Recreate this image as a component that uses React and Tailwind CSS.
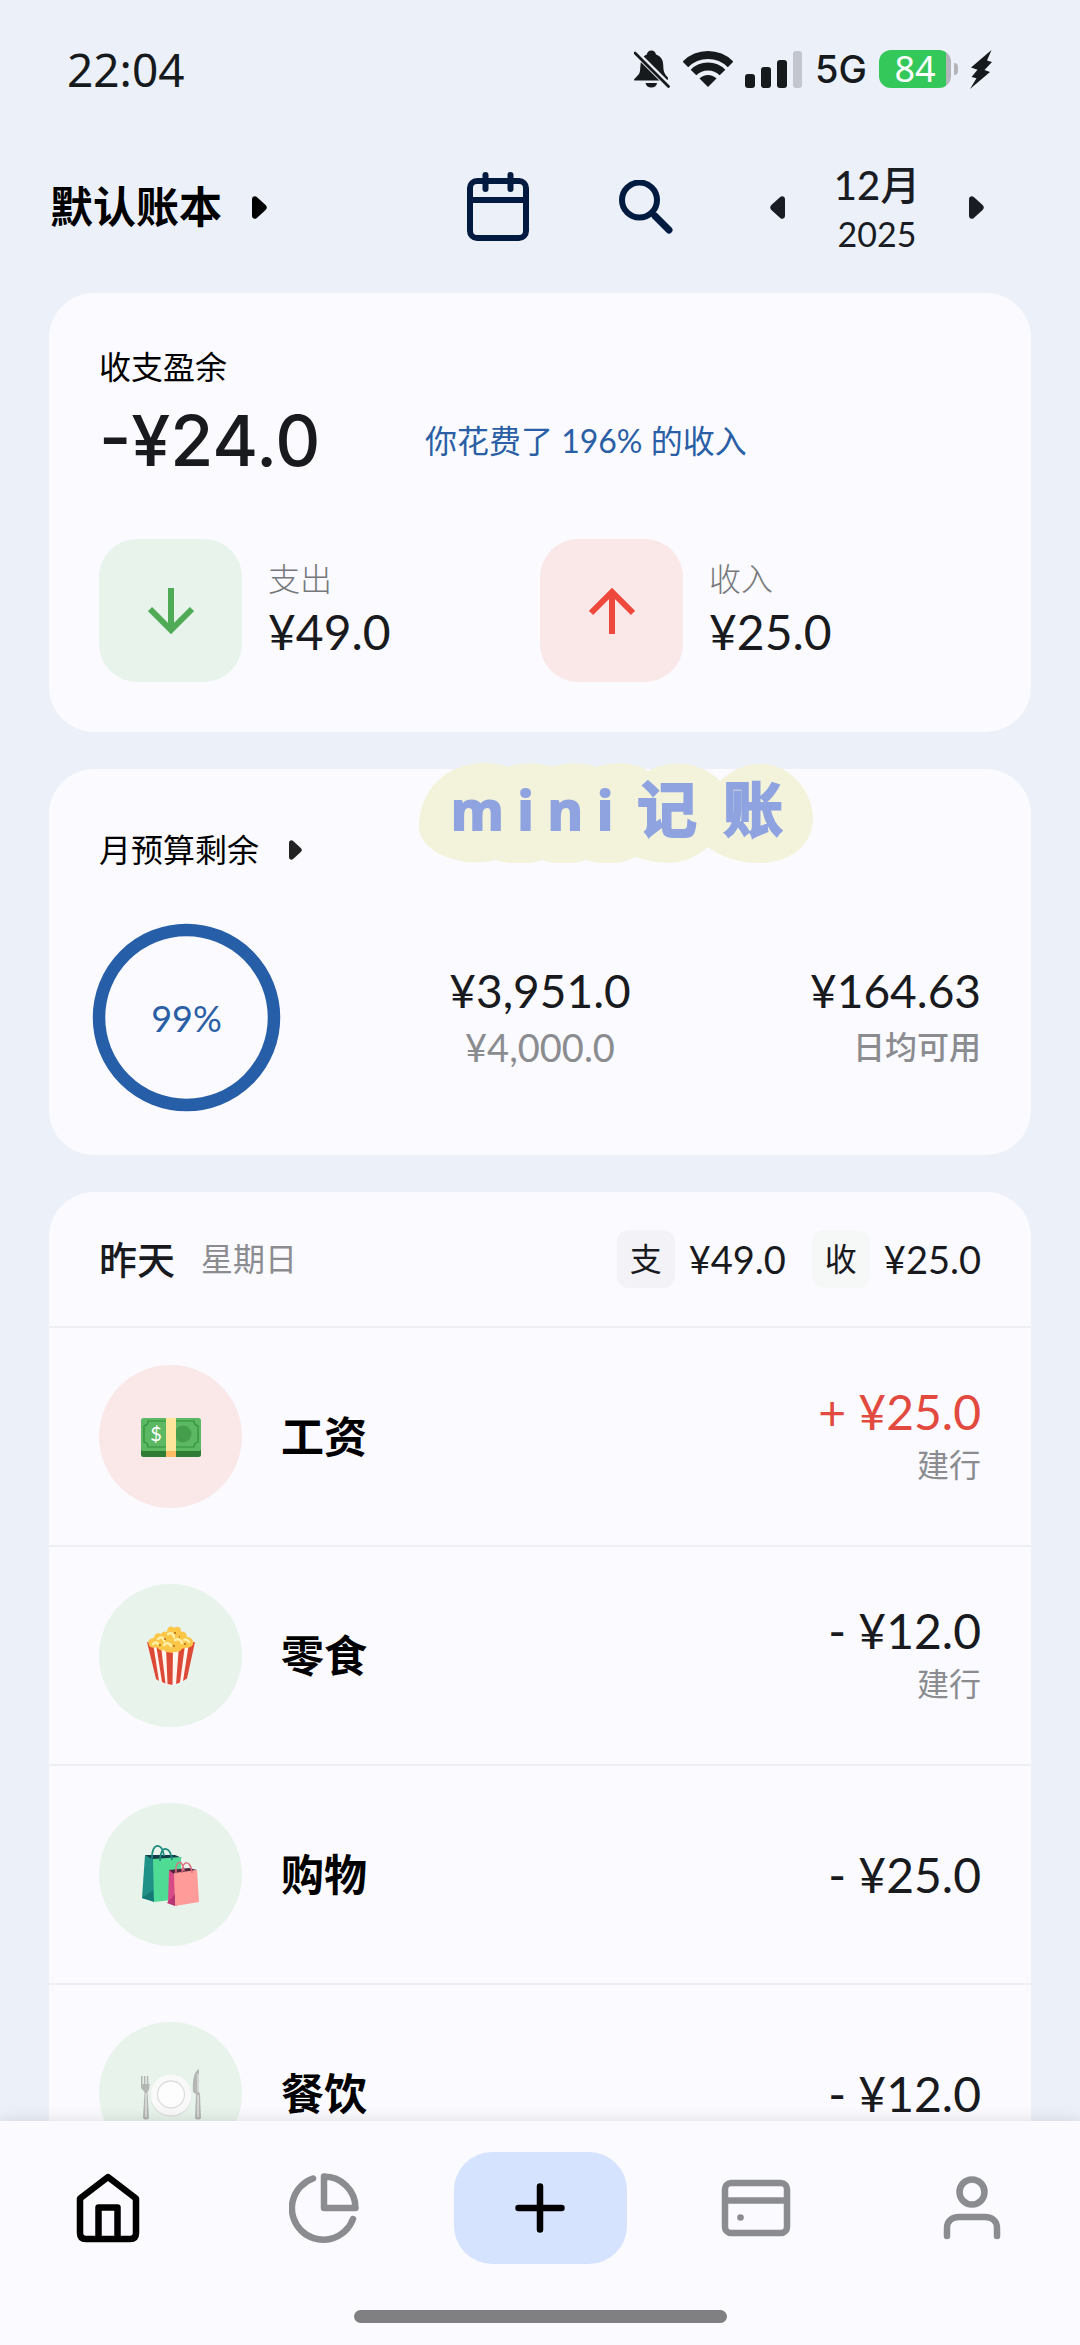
import React from 'react';

const TriangleIcon = ({ className }) => (
    <svg viewBox="0 0 15 23" className={className} fill="currentColor" aria-hidden="true">
        <path d="M0 3.2C0 .6 2.8-.7 4.8 1.1l8.8 8c1.6 1.4 1.6 3.4 0 4.8l-8.8 8C2.800 23.700 0 22.400 0 19.800Z" />
    </svg>
);

const BellOffIcon = () => (
    <svg viewBox="0 0 36 38" className="w-[36px] h-[38px]" aria-hidden="true">
        <path
            d="M0 29.500 5 24c1.500-2.500 1-6 1.700-10.500C7.500 8.500 9.600 6 12.800 4.600 13.400 1.800 15 .6 17.400.6s4 1.200 4.600 4c4.500 1.500 7 5.200 7.200 10 .2 6 .6 9 4.300 12.400.9.9 1 3.600-1.500 3.600H2C.6 30.600-.5 30.300 0 29.500Z"
            fill="#161a1c"
        />
        <path d="M11.500 33h11.600c-.6 3-2.800 4.600-5.800 4.600s-5.200-1.600-5.800-4.600Z" fill="#161a1c" />
        <path d="M0 1 36 37" stroke="#ecf0f9" strokeWidth="6" />
        <path d="M1 3 34.500 36.500" stroke="#161a1c" strokeWidth="2.800" strokeLinecap="round" />
    </svg>
);

const WifiIcon = () => (
    <svg viewBox="0 0 50 36" className="w-[50px] h-[36px]" fill="none" stroke="#161a1c" strokeWidth="8" aria-hidden="true">
        <path d="M2.400 13.400a32 32 0 0 1 45.200 0" />
        <path d="M10.500 21.500a20.500 20.500 0 0 1 29 0" />
        <path d="m25 36-8.500-8.500a12 12 0 0 1 17 0Z" fill="#161a1c" stroke="none" />
    </svg>
);

const SignalIcon = () => (
    <svg viewBox="0 0 58 37" className="w-[58px] h-[37px]" fill="#161a1c" aria-hidden="true">
        <rect x="0" y="23" width="10" height="14" rx="3" />
        <rect x="16" y="16" width="10" height="21" rx="3" />
        <rect x="32" y="9" width="10" height="28" rx="3" />
        <rect x="48" y="0" width="9" height="37" rx="3" fill="#c3c6cf" />
    </svg>
);

const BoltIcon = () => (
    <svg viewBox="0 0 23 39" className="w-[23px] h-[39px]" fill="#161a1c" aria-hidden="true">
        <path d="M21.500 0 1 17.500l6.500 2.200L1.500 27l5 1.300L0 39l20-17-5.500-2L22 12l-5-1.500Z" />
    </svg>
);

const CalendarIcon = () => (
    <svg viewBox="0 0 64 70" className="w-[64px] h-[70px]" fill="none" stroke="#001b3f" strokeWidth="6" strokeLinecap="round" aria-hidden="true">
        <rect x="4" y="9" width="56" height="57" rx="7" />
        <path d="M4 28h56M19.500 3v14M44.500 3v14" />
    </svg>
);

const SearchIcon = () => (
    <svg viewBox="0 0 54 54" className="w-[54px] h-[54px]" fill="none" stroke="#001b3f" aria-hidden="true">
        <circle cx="20.500" cy="20" r="17.500" strokeWidth="6" />
        <path d="m36 36 14 14" strokeWidth="7" strokeLinecap="round" />
    </svg>
);

const DownArrow = () => (
    <svg viewBox="0 0 46 46" className="w-[46px] h-[46px]" fill="none" stroke="#4fab55" strokeWidth="6" aria-hidden="true">
        <path d="M23 0v42M2 21l21 21 21-21" />
    </svg>
);

const UpArrow = () => (
    <svg viewBox="0 0 46 46" className="w-[46px] h-[46px]" fill="none" stroke="#ee473c" strokeWidth="6" aria-hidden="true">
        <path d="M23 46V4M2 25 23 4l21 21" />
    </svg>
);

const CashIcon = () => (
    <svg viewBox="0 0 60 40" className="w-[60px] h-[40px]" aria-hidden="true">
        <rect y="4" width="60" height="36" rx="2.500" fill="#2f7d34" />
        <rect y="1" width="60" height="33" rx="2.500" fill="#5cb863" />
        <path d="M7 4h46c0 3 1.500 4.500 4 5v16c-2.500.5-4 2-4 5H7c0-3-1.500-4.500-4-5V9c2.500-.5 4-2 4-5Z" fill="none" stroke="#2f8f3a" strokeWidth="1.200" />
        <circle cx="42" cy="17" r="8.500" fill="#449e4b" />
        <path d="M25 1h10v33H25Z" fill="#fde59b" />
        <path d="M25 34h10v6H25Z" fill="#fdbb63" />
        <text x="15" y="24" textAnchor="middle" fill="#fff" fontSize="20" fontFamily="Lato, sans-serif">$</text>
    </svg>
);

const PopcornIcon = () => (
    <svg viewBox="0 0 50 60" className="w-[50px] h-[60px]" aria-hidden="true">
        <path d="M1 16 10 53c8 4 10 6 15 6s8-2 15-6l9-37-24 8Z" fill="#fff5ef" />
        <path d="M1 16 10 53l3 2L7 17ZM10 18l6 38 3.500 1.500L15 20ZM20 21l1.500 37 5 1L27 21ZM33 20l-3 38 4-1.500L39 19ZM43 17l-6 38 4-2.500L49 16Z" fill="#dc4a37" />
        <path d="M3 19c-2-4 1-7 5-7 0-4 4-6 7-4 2-3 4-3 6-2 0-5 4-7 7-4 4-3 8 0 7 4 4-1 6 2 6 5 5 0 8 5 5 9-4 3-9 1-11 4-3 3-7 1-9 3-3-1-6 0-8-3-4 1-6-1-7-3-3 1-7 1-8-2Z" fill="#fcc648" />
        <path d="M12 13c3-3 6-1 6 2M22 8c3-2 6 0 6 3M29 14c3-2 6 0 7 3M18 19c2-3 6-2 7 1M7 18c2-2 4-2 5 0M38 14c2-1 4 0 5 2" fill="none" stroke="#fff0a8" strokeWidth="2.500" strokeLinecap="round" />
        <path d="M19 12v2M29 6v2M27 20h2M38 18h2M13 19h2M33 11h1" stroke="#a9681c" strokeWidth="1.500" />
    </svg>
);

const BagsIcon = () => (
    <svg viewBox="0 0 58 62" className="w-[58px] h-[62px]" aria-hidden="true">
        <path d="M3 11 0 54l12 3 4-42Z" fill="#1f9187" />
        <path d="M3 11h30l7 3-25 4Z" fill="#123c48" />
        <path d="m11 15 28-2v42l-27 3Z" fill="#4fdb94" />
        <path d="m11 46-11 8 12 4Z" fill="#157a76" />
        <path d="M10 15c-1-17 11-17 12-3M18 17c0-17 11-15 12-1" fill="none" stroke="#1d8a7c" strokeWidth="1.800" />
        <path d="M27 26 26 59l9 3 2-34Z" fill="#d84a87" />
        <path d="m27 26 20-2 8 2-22 5Z" fill="#50263c" />
        <path d="m32 29 23-3 2 32-24 4Z" fill="#ff9b98" />
        <path d="m33 50-8 9 8 3Z" fill="#b73673" />
        <path d="M34 30c-1-15 7-15 8-3M40 29c0-14 9-13 10 0" fill="none" stroke="#dc6f83" strokeWidth="1.500" />
    </svg>
);

const PlateIcon = () => (
    <svg viewBox="0 0 60 52" className="w-[60px] h-[52px]" aria-hidden="true">
        <circle cx="30" cy="28" r="20.500" fill="#d5d8d6" />
        <circle cx="30" cy="27" r="20.500" fill="#f9f9f9" />
        <circle cx="30" cy="26.500" r="13.500" fill="#fdfdfd" stroke="#dcdedd" strokeWidth="1.300" />
        <path d="M0 8h1.500v8h1.400V8h1.500v8h1.400V8h1.500v8H8.700L8 21.500 6.500 24 8 50c-1 2-5 2-6 0l1.500-26L0 20Z" fill="#b4b6b4" />
        <path d="M58 1v23l1 2 1 24c-1 2-5 2-6 0l1-24-3-2c-.5-9 0-20 6-23Z" fill="#b4b6b4" />
        <path d="M5 25v24M57 6v18M57 27v22" stroke="#e8e9e8" strokeWidth="1.200" />
    </svg>
);

const HomeIcon = () => (
    <svg viewBox="0 0 64 70" className="w-[64px] h-[70px]" fill="none" stroke="#000" strokeWidth="6.500" strokeLinejoin="round" aria-hidden="true">
        <path d="M4 25.500 32 4l28 21.500V60q0 6-6 6H10q-6 0-6-6Z" />
        <path d="M22.500 66V34.500h19V66" />
    </svg>
);

const PieIcon = () => (
    <svg viewBox="0 0 70 70" className="w-[70px] h-[70px]" fill="none" stroke="#8b8c90" strokeWidth="6.500" strokeLinecap="round" strokeLinejoin="round" aria-hidden="true">
        <path d="M24 5.500A31.500 31.500 0 1 0 64 46" />
        <path d="M35 3.500A31.500 31.500 0 0 1 66.500 35H35Z" />
    </svg>
);

const PlusIcon = () => (
    <svg viewBox="0 0 50 50" className="w-[50px] h-[50px]" stroke="#000" strokeWidth="6.500" strokeLinecap="round" aria-hidden="true">
        <path d="M25 3.500v43M3.500 25h43" />
    </svg>
);

const WalletIcon = () => (
    <svg viewBox="0 0 70 58" className="w-[70px] h-[58px]" fill="none" stroke="#8b8c90" strokeWidth="6.500" aria-hidden="true">
        <rect x="4" y="4" width="62" height="50" rx="6" />
        <path d="M4 21.500h62" />
        <circle cx="19.500" cy="38.500" r="3.300" fill="#8b8c90" stroke="none" />
    </svg>
);

const UserIcon = () => (
    <svg viewBox="0 0 58 64" className="w-[58px] h-[64px]" fill="none" stroke="#8b8c90" strokeWidth="6.500" strokeLinecap="round" aria-hidden="true">
        <circle cx="29" cy="16" r="12.500" />
        <path d="M4 60v-8c0-7 5-11 12-11h26c7 0 12 4 12 11v8" />
    </svg>
);

const records = [
    { name: '工资', amount: '+ ¥25.0', account: '建行', income: true, icon: <CashIcon /> },
    { name: '零食', amount: '- ¥12.0', account: '建行', icon: <PopcornIcon /> },
    { name: '购物', amount: '- ¥25.0', icon: <BagsIcon /> },
    { name: '餐饮', amount: '- ¥12.0', icon: <PlateIcon /> },
];

const tabs = [
    { label: '首页', icon: <HomeIcon /> },
    { label: '统计', icon: <PieIcon /> },
    { label: '记一笔', icon: <PlusIcon />, primary: true },
    { label: '资产', icon: <WalletIcon /> },
    { label: '我的', icon: <UserIcon /> },
];

const StatusBar = () => (
    <div className="flex h-[138px] shrink-0 items-center justify-between pl-[67px] pr-[87px] text-[#161a1c]">
        <span className="font-['Noto_Sans'] text-[46px] leading-none">22:04</span>
        <div className="flex items-center">
            <BellOffIcon />
            <div className="ml-[13px]"><WifiIcon /></div>
            <div className="ml-[12px]"><SignalIcon /></div>
            <span className="ml-[12px] font-['Inter'] text-[38px] font-medium leading-none">5G</span>
            <div className="ml-[12px] flex h-[38px] w-[72px] items-center justify-center rounded-[12px] bg-linear-to-r from-[#34c759] from-93% to-[#b3b5ba] to-93% font-['Noto_Sans'] text-[36px] leading-none text-white">
                84
            </div>
            <div className="ml-[3px] h-[12px] w-[4px] rounded-r-full bg-[#b3b5ba]" />
            <div className="ml-[12px]"><BoltIcon /></div>
        </div>
    </div>
);

const Header = () => (
    <header className="mb-[17px] flex h-[138px] shrink-0 items-center pl-[50px] pr-[96px]">
        <button type="button" className="flex items-center gap-[30px] text-[43px] font-bold leading-[56px] text-black">
            默认账本
            <TriangleIcon className="h-[23px] w-[15px]" />
        </button>
        <button type="button" aria-label="日历" className="ml-auto"><CalendarIcon /></button>
        <button type="button" aria-label="搜索" className="ml-[89px]"><SearchIcon /></button>
        <button type="button" aria-label="上个月" className="ml-[97px] text-[#191c22]">
            <TriangleIcon className="h-[23px] w-[15px] rotate-180" />
        </button>
        <div className="flex w-[184px] flex-col items-center text-[#191c22]">
            <span className="text-[40px] font-medium leading-[54px]">12月</span>
            <span className="text-[34px] leading-[44px]">2025</span>
        </div>
        <button type="button" aria-label="下个月" className="text-[#191c22]">
            <TriangleIcon className="h-[23px] w-[15px]" />
        </button>
    </header>
);

const FlowTile = ({ label, value, icon, tileClass }) => (
    <div className="flex items-center gap-[26px]">
        <div className={`flex size-[143px] items-center justify-center rounded-[38px] ${tileClass}`}>{icon}</div>
        <div className="pb-[6px]">
            <p className="text-[32px] font-light leading-[48px] text-[#77787b]">{label}</p>
            <p className="text-[48px] leading-[58px]">{value}</p>
        </div>
    </div>
);

const BalanceCard = () => (
    <section className="rounded-[45px] bg-[#fafaff] p-[50px]">
        <h2 className="text-[32px] leading-[48px] text-black">收支盈余</h2>
        <div className="mt-[8px] flex items-center">
            <p className="min-w-[326px] font-['Inter'] text-[70px] font-medium leading-[84px]">-¥24.0</p>
            <p className="text-[32px] leading-[48px] text-[#2a5fa5]">你花费了 196% 的收入</p>
        </div>
        <div className="mt-[56px] grid grid-cols-2">
            <FlowTile label="支出" value="¥49.0" icon={<DownArrow />} tileClass="bg-[#e7f3eb]" />
            <FlowTile label="收入" value="¥25.0" icon={<UpArrow />} tileClass="bg-[#fae8e8]" />
        </div>
    </section>
);

// the sticker hangs over the top edge of the budget card
const Sticker = () => (
    <div className="absolute left-[370px] top-[-6px] h-[100px] w-[396px]">
        <svg viewBox="0 0 396 100" className="absolute inset-0 size-full" fill="#f2f3da" aria-hidden="true">
            <path d="M0 64C0 28 26 0 66 0c8 0 16 1 23 4 12-5 32-5 44 0 12-5 32-5 44 0 16-6 40-5 52 4 24-13 54-9 72 10 28-26 64-22 84 8 22 36 2 74-46 74-18 0-38-6-50-16-22 20-48 18-72 10-16 8-34 8-50 3-14 5-30 5-44 0-14 5-32 5-46 0C40 106 0 88 0 64Z" />
        </svg>
        <div className="relative flex h-full items-center justify-center gap-[24px] pb-[8px] font-['Noto_Sans','Noto_Sans_CJK_SC',sans-serif] font-bold leading-none text-[#8fa3e0] [-webkit-text-stroke:2px_#8fa3e0]">
            <div className="flex gap-[14px] text-[54px]">
                <span>m</span>
                <span>i</span>
                <span>n</span>
                <span>i</span>
            </div>
            <div className="flex gap-[26px] text-[60px]">
                <span>记</span>
                <span>账</span>
            </div>
        </div>
    </div>
);

const BudgetCard = () => (
    <section className="relative rounded-[45px] bg-[#fafaff] px-[50px] pb-[50px] pt-[57px]">
        <Sticker />
        <button type="button" className="flex items-center gap-[30px] text-[32px] leading-[48px] text-black">
            月预算剩余
            <TriangleIcon className="h-[20px] w-[13px] text-[#222]" />
        </button>
        <div className="mt-[56px] grid grid-cols-3 items-center">
            <div className="relative flex size-[175px] items-center justify-center">
                <svg viewBox="0 0 175 175" className="absolute inset-0 size-full overflow-visible" fill="none" aria-hidden="true">
                    <circle cx="87.500" cy="87.500" r="87.500" stroke="#265ea8" strokeWidth="12.500" />
                </svg>
                <span className="text-[36px] leading-[44px] text-[#2a5fa5]">99%</span>
            </div>
            <div className="text-center">
                <p className="text-[46px] leading-[58px]">¥3,951.0</p>
                <p className="text-[38px] leading-[54px] text-[#8b8c90]">¥4,000.0</p>
            </div>
            <div className="text-right">
                <p className="text-[46px] leading-[58px]">¥164.63</p>
                <p className="text-[32px] font-medium leading-[54px] text-[#8b8c90]">日均可用</p>
            </div>
        </div>
    </section>
);

const DayCard = () => (
    <section className="rounded-t-[45px] bg-[#fafaff]">
        <div className="flex h-[134px] items-center px-[50px]">
            <h2 className="text-[38px] font-medium leading-[48px]">昨天</h2>
            <span className="ml-[26px] text-[32px] leading-[48px] text-[#8b8c90]">星期日</span>
            <span className="ml-auto flex size-[58px] items-center justify-center rounded-[12px] bg-[#f3f3f7] text-[32px]">支</span>
            <span className="ml-[14px] text-[38px] leading-[48px]">¥49.0</span>
            <span className="ml-[26px] flex size-[58px] items-center justify-center rounded-[12px] bg-[#f6f7f7] text-[32px]">收</span>
            <span className="ml-[14px] text-[38px] leading-[48px]">¥25.0</span>
        </div>
        <ul>
            {records.map((item) => (
                <li key={item.name} className="flex min-h-[219px] items-center border-t-2 border-[#eeeff3] px-[50px]">
                    <div className={`flex size-[143px] items-center justify-center rounded-full ${item.income ? 'bg-[#fae8e8]' : 'bg-[#e7f3eb]'}`}>
                        {item.icon}
                    </div>
                    <span className="ml-[39px] text-[43px] font-bold leading-[56px] text-black">{item.name}</span>
                    <div className="ml-auto text-right">
                        <p className={`text-[48px] leading-[56px] ${item.income ? 'text-[#e24a40]' : ''}`}>{item.amount}</p>
                        {item.account && <p className="text-[32px] leading-[50px] text-[#8b8c90]">{item.account}</p>}
                    </div>
                </li>
            ))}
        </ul>
    </section>
);

const TabBar = () => (
    <nav className="relative shrink-0 bg-[#fafaff] pb-[22px] pt-[31px] shadow-[0_-2px_14px_rgba(0,0,0,0.1)]">
        <div className="grid grid-cols-5 items-center justify-items-center">
            {tabs.map((tab) => (
                <button
                    key={tab.label}
                    type="button"
                    aria-label={tab.label}
                    className={`flex h-[112px] items-center justify-center ${tab.primary ? 'w-[173px] rounded-[38px] bg-[#d6e3ff]' : 'w-[112px]'}`}
                >
                    {tab.icon}
                </button>
            ))}
        </div>
        <div className="mx-auto mt-[46px] h-[13px] w-[373px] rounded-full bg-[#808083]" />
    </nav>
);

const App = () => (
    <div className="flex h-screen flex-col bg-[#ecf0f9] font-['Lato','Noto_Sans_CJK_SC',sans-serif] text-[#191a1e]">
        <StatusBar />
        <Header />
        <main className="flex min-h-0 flex-1 flex-col gap-[37px] overflow-y-auto px-[49px] [scrollbar-width:none] *:shrink-0">
            <BalanceCard />
            <BudgetCard />
            <DayCard />
        </main>
        <TabBar />
    </div>
);

export default App;
